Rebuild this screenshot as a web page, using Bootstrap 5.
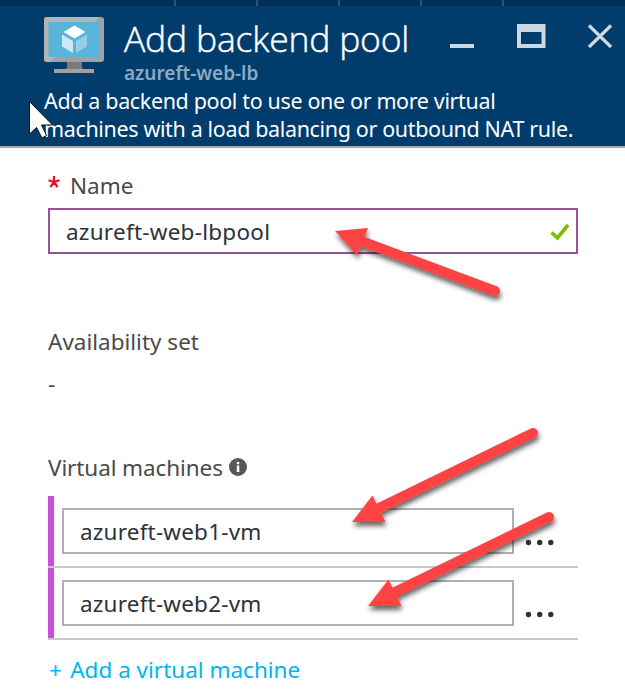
<!DOCTYPE html>
<html lang="en">
<head>
<meta charset="utf-8">
<meta name="viewport" content="width=device-width, initial-scale=1">
<title>Add backend pool</title>
<link href="https://cdn.jsdelivr.net/npm/bootstrap@5.3.0/dist/css/bootstrap.min.css" rel="stylesheet">
<style>
body{font-family:"Noto Sans","Open Sans",sans-serif;font-size:22.5px;line-height:28px;color:#4a4a4a;width:625px;height:690px;overflow:hidden;background:#fff}
.blade-head{height:148px;background:#003c6c;border-bottom:2px solid #aca9a8}
.top-strip{height:6px;background:#002f55;padding-left:174px;gap:80px}
.top-strip span{width:2px;background:#35516b}
.head-row{padding-left:44px;height:81px}
.vm-icon{margin-top:11px}
.titles{margin-left:20px;width:300px}
.blade-title{font-family:"Open Sans","Noto Sans",sans-serif;font-weight:300;-webkit-text-stroke:.45px #fff;font-size:35.5px;line-height:44px;margin-top:10px;letter-spacing:-.2px}
.blade-sub{font-size:19px;font-weight:600;line-height:20px;color:#8ca9c2;margin-top:3px}
.desc{padding-left:44px;font-size:21.5px;letter-spacing:-.36px}
.form-area{padding:24px 47px 0 48px}
.star{width:22px}
.name-box{height:46px;border:2px solid #9b4f96;margin-top:8px;padding:2px 6px 0 16px;color:#2d3239;letter-spacing:.25px}
.avail{margin-top:74px}
.dash{margin-top:14px}
.vms{margin-top:56px;margin-bottom:14px;letter-spacing:-.1px}
.info{margin:4px 0 0 6px}
.vm-row{height:72px;border-bottom:2px solid #c8c8c8}
.vm-bar{width:6px;background:#c74fd9}
.vm-box{width:452px;height:46px;border:2px solid #b0b0b0;margin-left:8px;padding:2px 0 0 16px;color:#2d3239;letter-spacing:.2px}
.dots{margin:31px 0 0 11px}
.add-link{color:#00b4f0;margin:16px 0 0 1px}
.plus{margin-right:2.5px}
</style>
</head>
<body class="position-relative text-nowrap">
<header class="blade-head text-white">
  <div class="top-strip d-flex"><span></span><span></span><span></span><span></span><span></span></div>
  <div class="head-row d-flex">
    <svg class="vm-icon flex-shrink-0" width="60" height="56" viewBox="0 0 60 56">
      <path d="M23 44h15v5q0 3 2 3v1H21v-1q2 0 2-3z" fill="#7a7a7a"/>
      <rect x="10" y="52" width="40" height="4" fill="#a0a1a2"/>
      <rect width="60" height="45" rx="3" fill="#a0a1a2"/>
      <path d="M3 0h53L6 45H3q-3 0-3-3V3q0-3 3-3z" fill="#b3b4b5"/>
      <rect x="4.500" y="5" width="51" height="35" fill="#59b4d9"/>
      <circle cx="30" cy="3" r="1" fill="#b8d432"/>
      <path d="M30.500 8.500 41.500 15 30.500 21.500 19.500 15z" fill="#fff"/>
      <path d="M18 17.500 29 24V36L18 29.500z" fill="#cde8f4"/>
      <path d="M43 17.500 32 24V36L43 29.500z" fill="#93cfe7"/>
    </svg>
    <div class="titles flex-shrink-0">
      <h1 class="blade-title mb-0">Add backend pool</h1>
      <div class="blade-sub">azureft-web-lb</div>
    </div>
    <svg class="flex-shrink-0" width="190" height="50" viewBox="424 6 190 50">
      <g fill="#ccd8e2"><rect x="450" y="44" width="24" height="4"/><path fill-rule="evenodd" d="M517 24h28.500v24H517zM521 32v12h20.500V32z"/></g>
      <path d="M589 25.500 611 47M611 25.500 589 47" stroke="#ccd8e2" stroke-width="3.200"/>
    </svg>
  </div>
  <div class="desc">Add a backend pool to use one or more virtual<br>machines with a load balancing or outbound NAT rule.</div>
</header>
<main class="form-area">
  <div class="d-flex"><span class="star"><svg width="12" height="12" viewBox="0 0 12 12" class="d-block mt-1"><path d="M6 6V0M6 6 .5 4.200M6 6 2.500 11M6 6 9.500 11M6 6 11.500 4.200" stroke="#e81123" stroke-width="2.200"/></svg></span><span>Name</span></div>
  <div class="name-box d-flex align-items-center justify-content-between"><span>azureft-web-lbpool</span>
    <svg width="20" height="18" viewBox="0 0 20 18"><path d="M1.500 9.500 7.500 15 18 2" fill="none" stroke="#7fba00" stroke-width="3.600"/></svg>
  </div>
  <div class="avail">Availability set</div>
  <div class="dash">-</div>
  <div class="vms d-flex"><span>Virtual machines</span>
    <svg class="info" width="18" height="18" viewBox="0 0 18 18"><circle cx="9" cy="9" r="9" fill="#55595e"/><path d="M7.800 4h2.500v2.300H7.800zM7.800 7.500h2.500V14H7.800z" fill="#fff"/></svg>
  </div>
  <div class="vm-row d-flex"><div class="vm-bar"></div><div class="vm-box d-flex align-items-center align-self-center">azureft-web1-vm</div>
    <svg class="dots" width="30" height="30" viewBox="525 527 30 30" fill="#2d3239"><circle cx="528.500" cy="542.500" r="2.700"/><circle cx="539.700" cy="542.500" r="2.700"/><circle cx="550.800" cy="542.500" r="2.700"/></svg></div>
  <div class="vm-row d-flex"><div class="vm-bar"></div><div class="vm-box d-flex align-items-center align-self-center">azureft-web2-vm</div>
    <svg class="dots" width="30" height="30" viewBox="525 527 30 30" fill="#2d3239"><circle cx="528.500" cy="542.500" r="2.700"/><circle cx="539.700" cy="542.500" r="2.700"/><circle cx="550.800" cy="542.500" r="2.700"/></svg></div>
  <div class="add-link"><span class="plus">+</span> Add a virtual machine</div>
</main>
<!-- annotation arrows and mouse pointer over the form -->
<svg class="position-absolute top-0 start-0" width="625" height="690" viewBox="0 0 625 690">
  <defs><filter id="sh" x="-10%" y="-10%" width="120%" height="130%"><feDropShadow dx="1" dy="4" stdDeviation="2.500" flood-color="#000" flood-opacity=".6"/></filter></defs>
  <g fill="#ff4343" stroke="#ff4343">
    <g filter="url(#sh)"><path d="M335 231 368 228 357 255z" stroke="none"/><path d="M361 241 495 291" stroke-width="10" stroke-linecap="round"/></g>
    <g filter="url(#sh)"><path d="M352 522 372.500 495.500 385.500 522z" stroke="none"/><path d="M377 509 533 433" stroke-width="10" stroke-linecap="round"/></g>
    <g filter="url(#sh)"><path d="M368 606 388.500 579.500 401.500 606z" stroke="none"/><path d="M393 593 549 517" stroke-width="10" stroke-linecap="round"/></g>
  </g>
  <path d="M29.500 101.500V134L36.500 127.500 42 138 46.500 135.500 41.500 125H52.500z" fill="#fff" stroke="#111" stroke-width="1"/>
</svg>
<script src="https://cdn.jsdelivr.net/npm/bootstrap@5.3.0/dist/js/bootstrap.bundle.min.js"></script>
</body>
</html>
